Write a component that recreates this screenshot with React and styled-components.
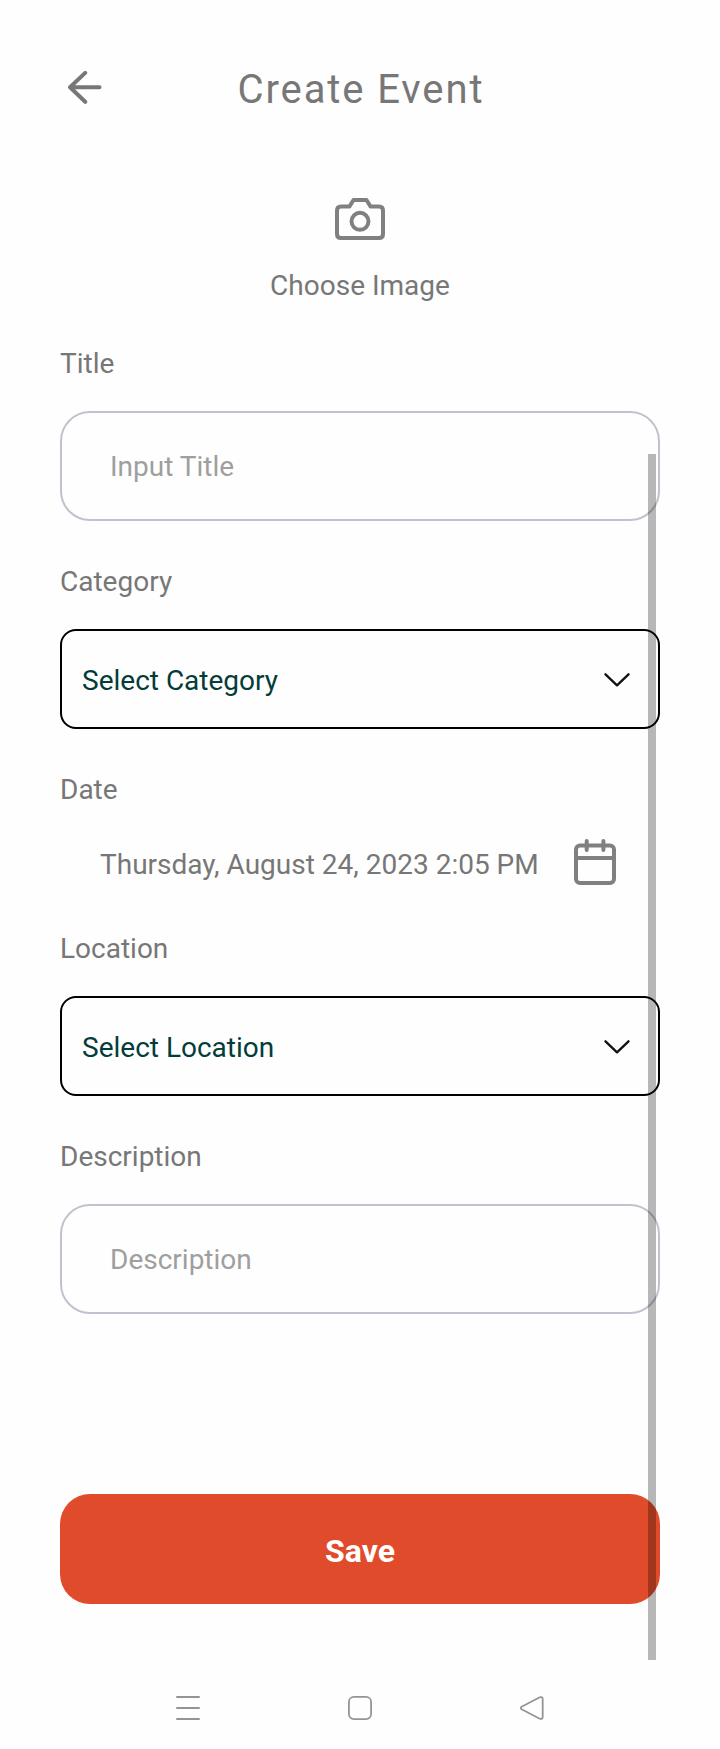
import React from "react";
import styled, { createGlobalStyle } from "styled-components";

const GlobalStyle = createGlobalStyle`
  * { box-sizing: border-box; }
  body { margin: 0; background: #fefefe; }
  svg { display: block; flex: none; }
  button, input { font: inherit; letter-spacing: inherit; margin: 0; }
`;

const Screen = styled.div`
  width: 720px;
  height: 1749px;
  display: flex;
  flex-direction: column;
  background: #fefefe;
  color: #777777;
  font-family: Roboto, sans-serif;
  font-size: 28px;
  line-height: 33px;
`;

const ScrollArea = styled.main`
  position: relative;
  height: 1660px;
  padding: 66px 60px 0;
  display: flex;
  flex-direction: column;
`;

const ScrollThumb = styled.div`
  position: absolute;
  top: 454px;
  right: 64px;
  width: 8px;
  height: 1206px;
  background: rgba(0, 0, 0, 0.28);
`;

const Header = styled.header`
  display: grid;
  grid-template-columns: 50px 1fr 50px;
  height: 47px;
`;

const BackButton = styled.button`
  padding: 5px 0 0 8px;
  border: 0;
  background: none;
  display: flex;
  align-items: flex-start;
`;

const Heading = styled.h1`
  margin: 0;
  padding-left: 2px;
  text-align: center;
  font-size: 40px;
  line-height: 47px;
  font-weight: 400;
  letter-spacing: 1.9px;
`;

const ImagePicker = styled.div`
  margin-top: 85px;
  height: 104px;
  display: flex;
  flex-direction: column;
  align-items: center;
  justify-content: space-between;
`;

const Field = styled.section`
  display: flex;
  flex-direction: column;
  margin-top: ${(p) => p.$top || 44}px;
`;

const Label = styled.label`
  height: 33px;
  margin-bottom: ${(p) => (p.$tight ? 0 : 31)}px;
`;

const TextInput = styled.input`
  width: 100%;
  height: 110px;
  padding: 0 48px;
  border: 2px solid #bfc3ce;
  border-radius: 30px;
  background: transparent;
  outline: none;
  &::placeholder { color: #9f9f9f; opacity: 1; }
`;

const Select = styled.button`
  height: 100px;
  padding: 2px 28px 0 20px;
  border: 2px solid #000;
  border-radius: 16px;
  background: transparent;
  color: #043c3a;
  display: flex;
  align-items: center;
  justify-content: space-between;
`;

const DateRow = styled.div`
  height: 82px;
  padding: 33px 44px 0 40px;
  display: flex;
  align-items: flex-start;
  justify-content: space-between;
`;

const DateText = styled.span`
  padding-top: 9px;
  white-space: nowrap;
`;

const SaveButton = styled.button`
  margin-top: 180px;
  height: 110px;
  padding: 3px 0 0;
  border: 0;
  border-radius: 30px;
  background: #e04c2b;
  color: #fff;
  font-size: 32px;
  line-height: 38px;
  font-weight: 700;
`;

const NavBar = styled.nav`
  height: 89px;
  padding: 36px 176px 0;
  display: flex;
  align-items: flex-start;
  justify-content: space-between;
`;

const Stroke = styled.svg.attrs({ fill: "none" })`
  stroke: ${(p) => p.$color || "#777777"};
  stroke-width: ${(p) => p.$weight || 4}px;
  stroke-linecap: round;
  stroke-linejoin: round;
`;

const BackIcon = () => (
  <Stroke width="34" height="34" viewBox="0 0 34 34" $weight={4}>
    <path d="M31.5 16.2H2.5M17.2 1.9L2 16.2L17.2 30.8" />
  </Stroke>
);

const CameraIcon = () => (
  <Stroke width="50" height="42" viewBox="0 0 50 42" $color="#808080">
    <path d="M2 12.5Q2 8.5 6 8.5H14.5L18.5 2H31.5L35.5 8.5H44Q48 8.5 48 12.5V36Q48 40 44 40H6Q2 40 2 36Z" />
    <circle cx="25" cy="23.3" r="8.5" />
  </Stroke>
);

const CalendarIcon = () => (
  <Stroke width="42" height="46" viewBox="0 0 42 46" $color="#808080">
    <rect x="2" y="6.5" width="38" height="37.5" rx="4" />
    <path d="M2 19H40M12.7 2V11M29.4 2V11" />
  </Stroke>
);

const Chevron = () => (
  <Stroke width="26" height="14" viewBox="0 0 26 14" $color="#111" $weight={2.3}>
    <path d="M1.5 1.3L13 12.3L24.5 1.3" />
  </Stroke>
);

const Dropdown = ({ text }) => (
  <Select type="button">
    <span>{text}</span>
    <Chevron />
  </Select>
);

export default function App() {
  return (
    <Screen>
      <GlobalStyle />
      <ScrollArea>
        <Header>
          <BackButton type="button" aria-label="Back"><BackIcon /></BackButton>
          <Heading>Create Event</Heading>
        </Header>
        <ImagePicker>
          <CameraIcon />
          <span>Choose Image</span>
        </ImagePicker>
        <Field $top={45}>
          <Label htmlFor="title">Title</Label>
          <TextInput id="title" placeholder="Input Title" />
        </Field>
        <Field>
          <Label>Category</Label>
          <Dropdown text="Select Category" />
        </Field>
        <Field>
          <Label $tight>Date</Label>
          <DateRow>
            <DateText>Thursday, August 24, 2023 2:05 PM</DateText>
            <CalendarIcon />
          </DateRow>
        </Field>
        <Field>
          <Label>Location</Label>
          <Dropdown text="Select Location" />
        </Field>
        <Field>
          <Label htmlFor="description">Description</Label>
          <TextInput id="description" placeholder="Description" />
        </Field>
        <SaveButton type="button">Save</SaveButton>
        <ScrollThumb />
      </ScrollArea>
      <NavBar>
        <Stroke width="24" height="24" viewBox="0 0 24 24" $color="#949494" $weight={2}>
          <path d="M1 1H23M1 12H23M1 23H23" />
        </Stroke>
        <Stroke width="24" height="24" viewBox="0 0 24 24" $color="#949494" $weight={1.8}>
          <rect x="0.9" y="0.9" width="22.2" height="22.2" rx="5" />
        </Stroke>
        <Stroke width="24" height="24" viewBox="0 0 24 24" $color="#949494" $weight={1.8}>
          <path d="M1.6 10.7Q0.2 12 1.6 13.3L19.8 22.7Q22.7 23.6 22.7 20.7V3.3Q22.7 0.4 19.8 1.3Z" />
        </Stroke>
      </NavBar>
    </Screen>
  );
}
